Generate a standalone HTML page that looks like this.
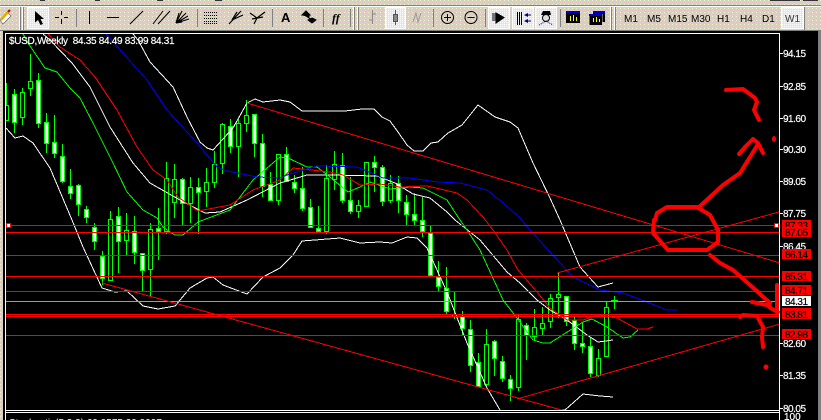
<!DOCTYPE html>
<html><head><meta charset="utf-8"><title>$USD,Weekly</title>
<style>
html,body{margin:0;padding:0;background:#000;width:821px;height:420px;overflow:hidden}
svg{display:block}
text{font-family:"Liberation Sans",sans-serif;font-size:10px}
.s{stroke-width:.2px}
</style></head><body>
<svg width="821" height="420" viewBox="0 0 821 420" xmlns="http://www.w3.org/2000/svg">
<defs>
<pattern id="d" width="4" height="4" patternUnits="userSpaceOnUse">
<rect width="4" height="4" fill="#d6d0c8"/><rect x="0" y="0" width="1" height="1" fill="#f2f0c4"/><rect x="2" y="2" width="1" height="1" fill="#e4c4c4"/><rect x="2" y="0" width="1" height="1" fill="#c8d4c0"/><rect x="0" y="2" width="1" height="1" fill="#dcc8c8"/>
</pattern>
<pattern id="l" width="2" height="2" patternUnits="userSpaceOnUse">
<rect width="2" height="2" fill="#e8e4de"/><rect width="1" height="1" fill="#fff"/>
</pattern>
<clipPath id="c"><rect x="6" y="34" width="773" height="376"/></clipPath>
</defs>
<g shape-rendering="crispEdges">
<rect width="821" height="420" fill="#000"/>
<rect width="821" height="31" fill="url(#d)"/>
<rect x="0" y="0" width="3" height="420" fill="url(#d)"/>
<rect x="818" y="31" width="3" height="389" fill="#808080"/>
<path d="M40 0h5v1h-5zM95 0h5v1h-5zM157 0h6v1h-6zM215 0h7v1h-7zM770 0h30v1h-30zM803 0h15v1h-15z" fill="#333"/>
<rect y="5" width="821" height="1" fill="#808080"/><rect y="6" width="821" height="1" fill="#fff"/>
<rect y="30" width="821" height="1" fill="#808080"/>
<!-- separators -->
<path d="M19.5 7V30M22.5 7V30M353.5 7V30M357.5 7V30M610.5 7V30M614.5 7V30" stroke="#fff" fill="none"/>
<path d="M20.5 7V30M23.5 7V30M354.5 7V30M358.5 7V30M611.5 7V30M615.5 7V30M76.5 9V27M197.5 9V27M272.5 9V27M323.5 9V27M350.5 9V27M433.5 9V27M485.5 9V27M560.5 9V27M804.5 7V30" stroke="#808080" fill="none"/>
<!-- pressed -->
<g fill="url(#l)" stroke="#fff"><rect x="27.5" y="7.5" width="21" height="21"/><rect x="385.5" y="7.5" width="20" height="21"/><rect x="488.5" y="7.5" width="21" height="21"/><rect x="512.5" y="7.5" width="21" height="21"/><rect x="535.5" y="7.5" width="21" height="21"/><rect x="781.5" y="7.5" width="22" height="21"/></g>
</g>
<!-- pencil -->
<path d="M0 20L8 13L11 16L3 24Z" fill="#fff" stroke="#555" stroke-width=".6"/>
<path d="M1 20L8 12" stroke="#e0b000" stroke-width="2.5"/><path d="M8 12L10 10" stroke="#c00000" stroke-width="2"/>
<!-- cursor -->
<path d="M35 11L35 22.5L38 20L40.5 25L43 24L40.5 19L44 19Z" fill="#000"/>
<g shape-rendering="crispEdges" fill="none" stroke="#000">
<path d="M61.5 11V15M61.5 19V24M55 17.5H59M64 17.5H68"/>
<path d="M89.5 11V24M107 17.5H119"/>
<path d="M204 12.5H217M204 15.5H217M204 18.5H217M204 21.5H217M204 23.5H217" stroke-dasharray="1 1"/>
</g>
<g fill="none" stroke="#000" stroke-width="1">
<path d="M130 24L143 11M153 24L163 11M158 24L170 11"/>
<path d="M176 23L189 19M176 23L188 16M176 23L186 13M176 23L182 11M176 23L179 13" stroke-width="1.1"/>
<path d="M176 22L182 21" stroke-width="3"/>
<path d="M229 24L241 11M232 20L243 15M232 20L237 12" stroke-width="1.2"/>
<path d="M250 13L257 18L265 12M257 18L254 24M252 19L263 17" stroke-width="1.2"/>
</g>
<text x="281" y="22" style="font-size:13px;font-weight:bold">A</text>
<path d="M306 11L310 15L302 15ZM303 14H309V17L303 15ZM312 18L316 20L312 23L308 20ZM306 16L312 20" fill="#000" stroke="#000"/>
<text x="332" y="22" style="font-size:12px;font-style:italic;font-weight:bold;font-family:'Liberation Serif',serif">ff</text>
<g shape-rendering="crispEdges" fill="none" stroke="#8a8a8a">
<path d="M372.5 10V24M369 20H372M373 14H376"/>
<path d="M395.5 10V25" stroke="#555"/><rect x="393.5" y="14.5" width="4" height="7" fill="#888" stroke="#555"/>
</g>
<path d="M413 22L416 13L418 22L421 13" fill="none" stroke="#999"/>
<g fill="none" stroke="#000"><circle cx="447.5" cy="17.5" r="6"/><circle cx="471" cy="17.5" r="6"/></g>
<path d="M444 17.5H451M447.5 14V21M467.5 17.5H474.5" stroke="#000" shape-rendering="crispEdges"/>
<!-- auto scroll -->
<path d="M496 17.5L496 13L504 17.5L496 23Z" fill="#000" stroke="#000"/><path d="M492 14H497M492 16H497M492 18H497M492 20H497" stroke="#000" stroke-width="1" shape-rendering="crispEdges"/>
<path d="M517.5 12V25M519.5 12V25M521.5 12V25" stroke="#000" shape-rendering="crispEdges"/>
<path d="M524 15L528 13V17ZM524 21L528 19V23Z" fill="#000080"/><path d="M527 15H531M527 21H531" stroke="#000080"/>
<!-- expert -->
<path d="M541 15H551L550 11H543Z" fill="#000"/><circle cx="546" cy="18" r="3.5" fill="#e0e0e0" stroke="#000"/>
<path d="M539 25L546 21L553 25" fill="none" stroke="#000080" stroke-dasharray="1 1"/>
<!-- windows -->
<g shape-rendering="crispEdges">
<rect x="566" y="12" width="14" height="11" fill="#000"/><rect x="566" y="11" width="14" height="2" fill="#0000c0"/>
<path d="M570.5 21V16M573.5 21V15M576.5 21V17" stroke="#ff0"/>
<rect x="593" y="11" width="12" height="11" fill="#000"/><rect x="593" y="11" width="12" height="2" fill="#0000c0"/>
<rect x="589" y="14" width="13" height="11" fill="#000" stroke="#d6d0c8" stroke-width=".5"/><rect x="589" y="14" width="13" height="2" fill="#0000c0"/>
<path d="M593.5 22V18M596.5 22V17M599.5 22V19" stroke="#ff0"/>
</g>
<g fill="#000"><text x="624" y="22">M1</text><text x="647" y="22">M5</text><text x="668" y="22">M15</text><text x="691" y="22">M30</text><text x="717" y="22">H1</text><text x="740" y="22">H4</text><text x="762" y="22">D1</text><text x="785" y="22" fill="#333">W1</text></g>

<g shape-rendering="crispEdges">
<!-- frame -->
<path d="M5.5 33V420M5 33.5H780M779.5 33V420M5 410.5H780M5 412.5H780" stroke="#fff" fill="none"/>
<g clip-path="url(#c)">
<!-- wicks -->
<path stroke="#0f0" fill="none" d="M6.5 83V120M14.5 89V133M22.5 88V125M30.5 54V96M38.5 73V128M46.5 113V153M54.5 115V158M62.5 144V183M70.5 169V199M78.5 184V216M86.5 206V223M94.5 223V250M102.5 251V285M110.5 211V281M118.5 207V273M126.5 213V255M134.5 216V264M142.5 253V291M150.5 223V296M158.5 208V260M166.5 162V234M174.5 164V218M182.5 178V225M190.5 177V223M198.5 178V234M206.5 168V207M214.5 151V188M222.5 123V174M230.5 119V153M238.5 119V177M246.5 100V132M254.5 114V157M262.5 134V197M270.5 172V201M278.5 154V205M286.5 147V182M294.5 175V193M302.5 167V211M310.5 199V228M318.5 206V232M326.5 165V234M334.5 151V190M342.5 153V203M350.5 177V214M358.5 200V218M366.5 162V207M374.5 156V192M382.5 165V206M390.5 175V203M398.5 176V213M406.5 195V225M414.5 193V225M422.5 197V237M430.5 226V276M438.5 261V291M446.5 267V314M454.5 292V319M462.5 311V335M470.5 320V372M478.5 353V387M486.5 329V387M494.5 340V376M502.5 356V382M510.5 375V401M518.5 315V391M526.5 323V360M534.5 309V340M542.5 307V335M550.5 294V328M558.5 272V318M566.5 296V326M574.5 317V350M582.5 322V353M590.5 337V377M598.5 349V377M606.5 302V357M614.5 296V309M611 300.5H618"/>
<!-- hollow bodies -->
<path stroke="#0f0" fill="#000" d="M4.5 105.5h4v15h-4zM20.5 92.5h4v25h-4zM28.5 81.5h4v7h-4zM108.5 219.5h4v61h-4zM124.5 230.5h4v10h-4zM148.5 229.5h4v40h-4zM164.5 178.5h4v53h-4zM172.5 179.5h4v23h-4zM188.5 187.5h4v16h-4zM204.5 182.5h4v9h-4zM212.5 164.5h4v18h-4zM220.5 124.5h4v39h-4zM236.5 123.5h4v23h-4zM244.5 115.5h4v8h-4zM276.5 154.5h4v46h-4zM324.5 178.5h4v53h-4zM332.5 164.5h4v15h-4zM356.5 205.5h4v6h-4zM364.5 162.5h4v44h-4zM388.5 183.5h4v17h-4zM452.5 314.5h4v2h-4zM484.5 344.5h4v40h-4zM516.5 319.5h4v68h-4zM532.5 327.5h4v9h-4zM540.5 323.5h4v5h-4zM548.5 298.5h4v23h-4zM556.5 294.5h4v3h-4zM596.5 358.5h4v17h-4zM604.5 307.5h4v49h-4z"/>
<!-- white bodies -->
<path stroke="#0f0" fill="#fff" d="M12.5 94.5h4v28h-4zM36.5 80.5h4v43h-4zM44.5 122.5h4v21h-4zM52.5 142.5h4v11h-4zM60.5 156.5h4v25h-4zM68.5 186.5h4v7h-4zM76.5 185.5h4v19h-4zM84.5 209.5h4v8h-4zM92.5 227.5h4v14h-4zM100.5 256.5h4v22h-4zM116.5 216.5h4v25h-4zM132.5 231.5h4v21h-4zM140.5 253.5h4v17h-4zM156.5 228.5h4v3h-4zM180.5 179.5h4v24h-4zM196.5 187.5h4v5h-4zM228.5 126.5h4v20h-4zM252.5 114.5h4v29h-4zM260.5 143.5h4v43h-4zM268.5 184.5h4v16h-4zM284.5 154.5h4v27h-4zM292.5 182.5h4v6h-4zM300.5 188.5h4v20h-4zM308.5 207.5h4v20h-4zM316.5 228.5h4v3h-4zM340.5 165.5h4v35h-4zM348.5 200.5h4v11h-4zM372.5 162.5h4v5h-4zM380.5 167.5h4v34h-4zM396.5 183.5h4v17h-4zM404.5 202.5h4v12h-4zM412.5 214.5h4v6h-4zM420.5 220.5h4v11h-4zM428.5 233.5h4v42h-4zM436.5 277.5h4v9h-4zM444.5 288.5h4v23h-4zM460.5 316.5h4v12h-4zM468.5 329.5h4v36h-4zM476.5 362.5h4v24h-4zM492.5 341.5h4v17h-4zM500.5 361.5h4v17h-4zM508.5 379.5h4v9h-4zM524.5 325.5h4v10h-4zM564.5 296.5h4v25h-4zM572.5 320.5h4v23h-4zM580.5 343.5h4v3h-4zM588.5 346.5h4v27h-4z"/>
<!-- bollinger -->
<g fill="none" stroke="#fff">
<polyline points="133,34 138,40 150,62 173,87 187,117 200,142 207,148 213,150 233,128 247,103 255,99 263,102 280,100 290,102 302,111 345,111 362,109 374,109 382,117 390,121 398,132 407,145 414,151 423,151 431,143 438,142 448,133 462,125 478,105 495,117 510,122 518,128 533,163 550,198 560,220 580,267 598,287 613,283"/>
<polyline points="6,128 15,138 23,136 33,143 50,168 72,220 83,247 102,288 115,292 127,291 143,306 158,309 175,306 190,288 207,278 213,277 223,285 247,294 263,277 280,268 293,255 302,241 340,238 360,243 380,242 392,243 407,237 417,238 427,248 447,292 467,343 487,388 500,410"/>
<polyline points="560,410 565,410 583,394 600,396 613,397"/>
<polyline points="43,34 50,40 72,63 90,87 110,127 133,163 150,183 180,200 205,213 220,212 247,200 280,183 297,178 307,175 330,175 377,176 395,183 413,194 430,198 447,212 455,220 480,240 507,272 520,283 537,300 550,310 567,320 587,335 598,342 613,340"/>
</g>
<polyline fill="none" stroke="#0f0" points="23,34 28,43 45,68 57,72 70,88 80,98 93,123 113,163 127,192 143,210 157,218 163,227 170,232 175,235 183,235 198,222 230,210 253,180 280,157 288,158 307,167 317,167 330,177 348,192 360,187 370,182 390,189 410,187 423,188 447,200 458,217 467,230 480,250 503,300 517,318 533,340 543,343 550,343 583,322 592,319 607,327 623,338 630,337 638,330"/>
<polyline fill="none" stroke="#f00" points="48,34 60,47 80,60 95,77 117,110 137,147 153,170 167,180 178,197 198,211 230,205 253,190 280,180 293,168 330,172 343,175 360,185 380,184 400,187 427,186 457,193 467,200 483,217 493,230 507,250 518,270 537,292 550,308 567,320 583,320 598,315 617,318 637,329 647,329 653,327"/>
<polyline fill="none" stroke="#00f" points="106,34 113,42 147,80 167,110 197,143 217,167 227,171 257,177 280,178 287,175 317,166 357,167 383,178 410,178 437,182 460,183 487,190 503,203 520,218 530,230 550,252 573,277 600,290 623,293 647,302 667,310 678,310"/>
<!-- horizontal lines -->
<path stroke="#f00" fill="none" d="M6 225.5H779M6 232.5H779M6 255.5H779M6 276.5H779M6 291.5H779M6 314.5H779M6 316.5H779M6 335.5H779"/>
<path stroke="#9a9aa4" d="M6 301.5H779"/>
<!-- trendlines -->
<path stroke="#f00" fill="none" d="M247 103L780 263M102 283L565 411M517 399L780 324M557 273L779 212"/>
<rect x="6.5" y="223.5" width="4" height="4" fill="#fff" stroke="#f00"/>
<rect x="774.5" y="223.5" width="4" height="4" fill="#fff" stroke="#f00"/>
</g>
<!-- axis ticks -->
<path stroke="#fff" d="M780 53.5h3M780 86.5h3M780 118.5h3M780 149.5h3M780 181.5h3M780 213.5h3M780 246.5h3M780 343.5h3M780 375.5h3M780 408.5h3"/>
</g>
<!-- axis labels -->
<g fill="#fff" stroke="#fff" class="s" style="letter-spacing:-.5px"><text x="783" y="57">94.15</text><text x="783" y="90">92.85</text><text x="783" y="122">91.60</text><text x="783" y="153">90.30</text><text x="783" y="185">89.05</text><text x="783" y="217">87.75</text><text x="783" y="250">86.45</text><text x="783" y="347">82.60</text><text x="783" y="379">81.35</text><text x="783" y="412">80.05</text><text x="784" y="420" style="letter-spacing:0">100</text></g>
<g shape-rendering="crispEdges"><rect x="782" y="220" width="29" height="10" fill="#f00"/></g>
<text x="785" y="229" fill="#000" stroke="#000" class="s" style="letter-spacing:-.5px">87.33</text>
<g shape-rendering="crispEdges"><rect x="782" y="227" width="29" height="10" fill="#f00"/><rect x="782" y="249" width="29" height="10" fill="#f00"/><rect x="782" y="271" width="29" height="10" fill="#f00"/><rect x="782" y="285" width="29" height="10" fill="#f00"/><rect x="782" y="296" width="29" height="10" fill="#fff"/><rect x="782" y="308" width="29" height="11" fill="#f00"/><rect x="782" y="329" width="29" height="10" fill="#f00"/></g>
<g fill="#000" stroke="#000" class="s" style="letter-spacing:-.5px"><text x="785" y="236">87.05</text><text x="785" y="258">86.14</text><text x="785" y="280">85.31</text><text x="785" y="294">84.71</text><text x="785" y="305">84.31</text><text x="785" y="318">83.81</text><text x="785" y="338">82.98</text></g>
<text x="9" y="44" fill="#fff" stroke="#fff" class="s" xml:space="preserve" style="letter-spacing:-.3px">$USD,Weekly  84.35 84.49 83.99 84.31</text>
<text x="9" y="426" fill="#fff">Stochastic(5,3,3) 69.9575 39.9997</text>
<!-- hand drawn -->
<g fill="none" stroke="#f00" stroke-width="4" stroke-linejoin="round" stroke-linecap="round">
<polyline points="726,90 743,89 755,98 757,102 754,110 759,120"/>
<polyline points="698,208 710,197 723,185 740,173 750,157 758,144"/>
<polyline points="739,154 746,146 753,139 758,143 763,153"/>
<polyline points="655,220 657,213 667,207 697,207 710,215 718,230 718,242 707,250 668,250 653,233 654,220"/>
<polyline points="710,255 720,263 733,270 750,285 770,303"/>
<polyline points="752,302 767,305 772,309 778,312"/>
<polyline points="777,285 777,312"/>
<polyline points="740,317 743,315 757,316 763,327 762,337 763,347"/>
</g>
<ellipse cx="774" cy="139" rx="2" ry="3" fill="#f00"/>
<circle cx="766" cy="367" r="2.5" fill="#f00"/>
</svg>
</body></html>
